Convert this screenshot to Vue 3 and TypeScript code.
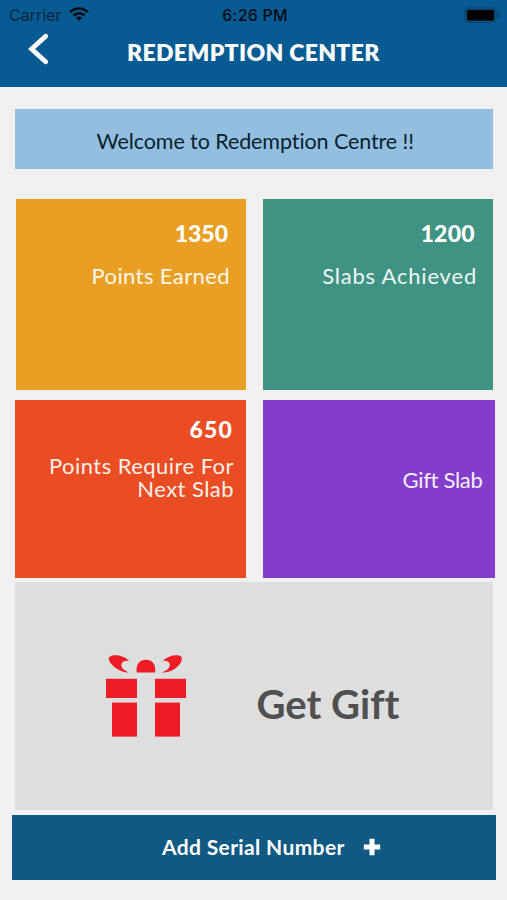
<script setup lang="ts">
interface Tile {
  id: string
  value?: string
  label: string
}

const tiles: Tile[] = [
  { id: 'earned', value: '1350', label: 'Points Earned' },
  { id: 'achieved', value: '1200', label: 'Slabs Achieved' },
  { id: 'required', value: '650', label: 'Points Require For\nNext Slab' },
  { id: 'gift', label: 'Gift Slab' },
]
</script>

<template>
  <main class="screen">
    <header class="header">
      <div class="status">
        <div class="carrier">
          <span>Carrier</span>
          <svg class="wifi" viewBox="0 0 20 14" width="20" height="14">
            <g fill="none" stroke="#050b12" stroke-width="2.5">
              <path d="M1.3 5.1C6.1.4 13.9.4 18.7 5.1" />
              <path d="M4.5 8.5C7.5 5.6 12.5 5.6 15.5 8.5" />
            </g>
            <path d="M6.9 10.7C8.7 9.1 11.3 9.1 13.1 10.7L10 13.8Z" fill="#050b12" />
          </svg>
        </div>
        <span class="clock">6:26 PM</span>
        <svg class="battery" viewBox="0 0 37 17" width="37" height="17">
          <rect x="1" y="1" width="31" height="14.5" rx="3.5" fill="none" stroke="#063e66" stroke-width="1.2" />
          <rect x="2.8" y="2.8" width="27.4" height="10.9" rx="1.8" fill="#000" />
          <path d="M34 5.8Q36 6.4 36 8.2T34 10.6Z" fill="#063e66" />
        </svg>
      </div>
      <div class="nav">
        <button class="back" aria-label="Back">
          <svg viewBox="0 0 22 32" width="22" height="32">
            <path d="M18.6 3.2L4.6 16L18.6 28.8" fill="none" stroke="#fff" stroke-width="4.8" stroke-linecap="round" stroke-linejoin="miter" />
          </svg>
        </button>
        <h1 class="title">REDEMPTION CENTER</h1>
      </div>
    </header>

    <p class="banner"><span>Welcome to Redemption Centre !!</span></p>

    <section class="tiles">
      <article v-for="tile in tiles" :key="tile.id" class="tile" :class="tile.id">
        <strong v-if="tile.value" class="value">{{ tile.value }}</strong>
        <span class="label">{{ tile.label }}</span>
      </article>
    </section>

    <section class="get-gift">
      <svg class="present" viewBox="0 0 82 82" width="82" height="82" fill="#ee1c25">
        <path d="M24.5 6.2C18-.3 7.5-1 4.3 2.2C2.2 5.2 7.5 11.5 13 14.4C17.2 16.6 20.6 17.7 24 17.4C18.5 15.3 15.3 11.7 16.6 8.4C17.8 6 21 5.3 24.5 6.2Z" />
        <path d="M57.5 6.2C64-.3 74.5-1 76.5 2.2C78 5.8 73.5 12 68.2 14.8C64 17 60.6 17.8 57.2 17.4C62.8 15.3 65.7 11.7 64.6 8.4C63.3 6 61 5.3 57.5 6.2Z" />
        <path d="M31.6 17.6V14C31.6 1.6 50.2 1.6 50.2 14V17.6Z" />
        <rect x="1" y="23.8" width="31" height="19.2" />
        <rect x="50" y="23.8" width="31" height="19.2" />
        <rect x="7" y="47.6" width="25" height="34" />
        <rect x="50" y="47.6" width="25" height="34" />
      </svg>
      <span class="gift-text">Get Gift</span>
    </section>

    <button class="serial">
      <span>Add Serial Number</span>
      <svg viewBox="0 0 18 18" width="18" height="18">
        <path d="M9 .8V17.2M.8 9H17.2" stroke="#fff" stroke-width="5" />
      </svg>
    </button>
  </main>
</template>

<style>
body {
  margin: 0;
  background: #f0f0f0;
}
</style>

<style scoped>
.screen {
  box-sizing: border-box;
  width: 507px;
  height: 900px;
  overflow: hidden;
  background: #f0f0f0;
  font-family: Lato, "Open Sans", sans-serif;
  font-variant-ligatures: none;
  white-space: nowrap;
}
.header {
  height: 87px;
  background: #085b92;
}
.status {
  display: grid;
  grid-template-columns: 1fr auto 1fr;
  align-items: center;
  height: 30px;
  padding: 0 6px 0 9px;
  color: #050b12;
  font: 400 16px/30px Inter, sans-serif;
}
.carrier {
  display: flex;
  align-items: center;
  gap: 8px;
  color: #08253d;
}
.wifi {
  margin-bottom: 2px;
}
.clock {
  font-weight: 500;
  letter-spacing: 0.2px;
}
.battery {
  justify-self: end;
}
.nav {
  display: flex;
  align-items: center;
  height: 42px;
  padding-left: 27px;
}
.back {
  display: flex;
  margin-top: -5px;
  padding: 0;
  border: 0;
  background: none;
}
.title {
  margin: 1px 0 0 78px;
  color: #fff;
  font-size: 23px;
  line-height: 30px;
  font-weight: 800;
  letter-spacing: 0.32px;
}
.banner {
  display: flex;
  align-items: center;
  justify-content: center;
  box-sizing: border-box;
  height: 60px;
  margin: 22px 14px 0 14.5px;
  padding: 3px 0 0 3px;
  background: #92bfdf;
  color: #0b1f2e;
  font-size: 21.5px;
  letter-spacing: -0.09px;
}
.tiles {
  display: grid;
  grid-template-columns: 231.5px 231.5px;
  grid-template-rows: 191px 178px;
  gap: 10px 17px;
  margin: 30px 12px 0 14.5px;
}
.tile {
  display: flex;
  flex-direction: column;
  align-items: flex-end;
  color: #fff;
}
.value {
  font-size: 23px;
  line-height: 28px;
  font-weight: 900;
}
.label {
  font-size: 22px;
  line-height: 23px;
  letter-spacing: 0.4px;
  text-align: right;
  white-space: pre;
  opacity: 0.92;
}
.earned {
  margin-left: 1.5px;
  padding: 20px 17px 0 0;
  background: #e99f24;
}
.achieved {
  margin-right: 1.5px;
  padding: 20px 17px 0 0;
  background: #3f9383;
}
.earned .label,
.achieved .label {
  margin-top: 17px;
}
.earned .label {
  margin-right: -1px;
}
.earned .value,
.achieved .value {
  margin-right: 1px;
}
.achieved .value {
  letter-spacing: 0.3px;
}
.achieved .label {
  margin-right: -1px;
  letter-spacing: 0.8px;
}
.required {
  padding: 15px 12px 0 0;
  background: #ea4d24;
}
.required .value {
  margin-right: 1px;
  margin-bottom: 11px;
  letter-spacing: 1.2px;
}
.required .label {
  letter-spacing: 0.45px;
}
.gift {
  padding: 68px 12px 0 0;
  background: #843dcb;
}
.gift .label {
  letter-spacing: -0.3px;
}
.get-gift {
  display: flex;
  align-items: center;
  height: 227.5px;
  margin: 4px 14px 0 14.5px;
  background: #dedede;
}
.present {
  margin-left: 90px;
}
.gift-text {
  margin: 16px 0 0 70px;
  color: #505050;
  font-size: 40px;
  line-height: 48px;
  font-weight: 700;
}
.serial {
  display: flex;
  align-items: center;
  gap: 18px;
  width: 484px;
  height: 65px;
  margin: 5px 0 0 12px;
  padding: 0 0 0 150px;
  border: 0;
  background: #105983;
  color: #fff;
  font: 700 21px/26px Lato, sans-serif;
  letter-spacing: 0.36px;
}
</style>
